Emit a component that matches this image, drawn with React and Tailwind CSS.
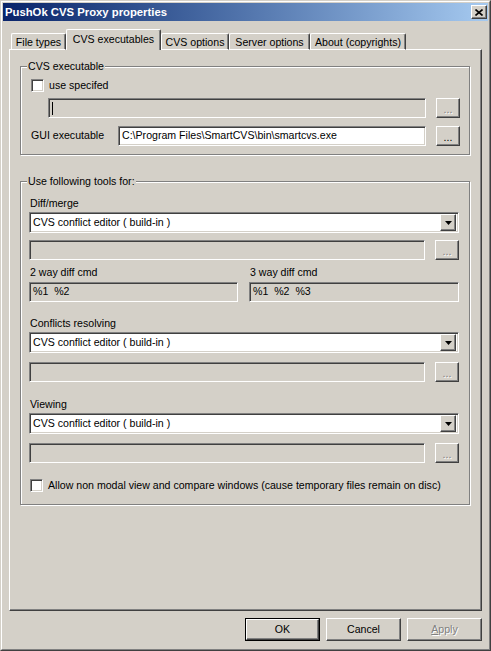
const raised =
  "border border-t-white border-l-white border-r-[#404040] border-b-[#404040] shadow-[inset_-1px_-1px_0_#808080]";
const sunken =
  "border border-t-[#808080] border-l-[#808080] border-r-white border-b-white shadow-[inset_1px_1px_0_#404040,inset_-1px_-1px_0_#d4d0c8]";
const disabledText = "text-[#808080] [text-shadow:1px_1px_0_#fff]";

function Field({ width, value = "", enabled = false, caret = false }) {
  return (
    <div
      className={`${sunken} flex h-[20px] shrink-0 items-center pl-[3px] whitespace-pre ${
        enabled ? "bg-white" : "bg-[#d4d0c8]"
      }`}
      style={{ width }}
    >
      {caret && <span className="h-[13px] w-px bg-black" />}
      {value}
    </div>
  );
}

function BrowseButton({ enabled = false }) {
  return (
    <div
      className={`${raised} flex h-[20px] w-[24px] shrink-0 items-end justify-center pb-[3px] leading-[10px] bg-[#d4d0c8] ${
        enabled ? "text-black" : disabledText
      }`}
    >
      ...
    </div>
  );
}

function FieldRow({ width = 396, value, enabled, browse, caret }) {
  return (
    <div className="flex items-center gap-[10px]">
      <Field width={width} value={value} enabled={enabled} caret={caret} />
      <BrowseButton enabled={browse} />
    </div>
  );
}

function Combo({ value }) {
  return (
    <div className={`${sunken} flex h-[21px] w-[430px] items-center justify-between bg-white pr-[2px] pl-[3px]`}>
      <span>{value}</span>
      <div className={`${raised} flex h-[17px] w-[16px] items-center justify-center bg-[#d4d0c8]`}>
        <svg width="7" height="4" viewBox="0 0 7 4">
          <polygon points="0,0 7,0 3.5,4" fill="#000" />
        </svg>
      </div>
    </div>
  );
}

function Checkbox({ label }) {
  return (
    <div className="flex items-center gap-[5px]">
      <div className={`${sunken} h-[13px] w-[13px] bg-white`} />
      <span className="leading-[13px]">{label}</span>
    </div>
  );
}

function Group({ title, height, className = "", children }) {
  return (
    <div
      className={`relative w-[450px] border border-[#808080] shadow-[1px_1px_0_#fff,inset_1px_1px_0_#fff] ${className}`}
      style={{ height }}
    >
      <span className="absolute -top-[7px] left-[6px] bg-[#d4d0c8] px-px leading-[13px]">{title}</span>
      {children}
    </div>
  );
}

function Label({ children, className = "" }) {
  return <div className={`pl-px leading-[13px] ${className}`}>{children}</div>;
}

const tabs = [
  { name: "File types", w: 55 },
  { name: "CVS executables", w: 95, active: true },
  { name: "CVS options", w: 68 },
  { name: "Server options", w: 81 },
  { name: "About (copyrights)", w: 96 },
];

function PushButton({ children, isDefault, disabled }) {
  const inner = (
    <div
      className={`${raised} flex h-full w-full items-center justify-center bg-[#d4d0c8] ${
        disabled ? disabledText : "text-black"
      }`}
    >
      {children}
    </div>
  );
  return (
    <div className={`h-[23px] w-[75px] ${isDefault ? "border border-black" : ""}`}>{inner}</div>
  );
}

export default function App() {
  return (
    <div className="h-[651px] w-[491px] border border-t-[#d4d0c8] border-l-[#d4d0c8] border-r-[#404040] border-b-[#404040] bg-[#d4d0c8] font-['Liberation_Sans',Arial,sans-serif] text-[10.6px] text-black">
      <div className="flex h-full flex-col border border-t-white border-l-white border-r-[#808080] border-b-[#808080] p-px">
        {/* caption */}
        <div className="flex h-[18px] shrink-0 items-center justify-between bg-gradient-to-r from-[#0a246a] to-[#a6caf0] pr-[1px] pl-[2px]">
          <span className="text-[11.3px] font-bold text-white">PushOk CVS Proxy properties</span>
          <div className={`${raised} flex h-[14px] w-[16px] items-center justify-center bg-[#d4d0c8]`}>
            <svg width="8" height="7" viewBox="0 0 8 7">
              <path d="M0.5 0.5 L7.5 6.5 M7.5 0.5 L0.5 6.5" stroke="#000" strokeWidth="1.6" />
            </svg>
          </div>
        </div>

        <div className="flex flex-col pt-[8px] pl-[6px]">
          {/* tab strip */}
          <div className="relative z-10 -mb-px flex h-[21px] items-end pl-[2px]">
            {tabs.map((tab) => (
              <div
                key={tab.name}
                style={{ width: tab.w }}
                className={`flex shrink-0 justify-center rounded-t-[2px] border-t border-l border-r border-t-white border-l-white border-r-[#404040] bg-[#d4d0c8] shadow-[inset_-1px_0_0_#808080] ${
                  tab.active ? "h-[21px] pt-[2px]" : "h-[17px] border-b border-b-white pt-[1px]"
                }`}
              >
                {tab.name}
              </div>
            ))}
          </div>

          {/* page */}
          <div className="flex h-[562px] w-[473px] flex-col border border-t-white border-l-white border-r-[#404040] border-b-[#404040] pl-[10px] shadow-[inset_-1px_-1px_0_#808080]">
            <Group title="CVS executable" height={89} className="mt-[16px]">
              <div className="flex flex-col pt-[12px] pl-[10px]">
                <Checkbox label="use specifed" />
                <div className="mt-[6px] pl-[17px]">
                  <FieldRow width={378} caret />
                </div>
                <div className="mt-[8px] flex items-center">
                  <span className="w-[87px]">GUI executable</span>
                  <FieldRow width={308} value="C:\Program Files\SmartCVS\bin\smartcvs.exe" enabled browse />
                </div>
              </div>
            </Group>

            <Group title="Use following tools for:" height={324} className="mt-[26px]">
              <div className="flex flex-col pt-[15px] pl-[8px]">
                <Label>Diff/merge</Label>
                <div className="mt-[2px]">
                  <Combo value="CVS conflict editor ( build-in )" />
                </div>
                <div className="mt-[7px]">
                  <FieldRow />
                </div>
                <div className="mt-[6px] grid grid-cols-[209px_210px] gap-x-[11px]">
                  <div className="flex flex-col gap-[3px]">
                    <Label>2 way diff cmd</Label>
                    <Field width={209} value="%1  %2" />
                  </div>
                  <div className="flex flex-col gap-[3px]">
                    <Label>3 way diff cmd</Label>
                    <Field width={210} value="%1  %2  %3" />
                  </div>
                </div>

                <Label className="mt-[15px]">Conflicts resolving</Label>
                <div className="mt-[2px]">
                  <Combo value="CVS conflict editor ( build-in )" />
                </div>
                <div className="mt-[9px]">
                  <FieldRow />
                </div>

                <Label className="mt-[16px]">Viewing</Label>
                <div className="mt-[2px]">
                  <Combo value="CVS conflict editor ( build-in )" />
                </div>
                <div className="mt-[9px]">
                  <FieldRow />
                </div>

                <div className="mt-[16px] pl-px">
                  <Checkbox label="Allow non modal view and compare windows (cause temporary files remain on disc)" />
                </div>
              </div>
            </Group>
          </div>

          {/* dialog buttons */}
          <div className="mt-[7px] flex w-[473px] justify-end gap-[6px]">
            <PushButton isDefault>OK</PushButton>
            <PushButton>Cancel</PushButton>
            <PushButton disabled>
              <span>
                <span className="underline">A</span>pply
              </span>
            </PushButton>
          </div>
        </div>
      </div>
    </div>
  );
}
